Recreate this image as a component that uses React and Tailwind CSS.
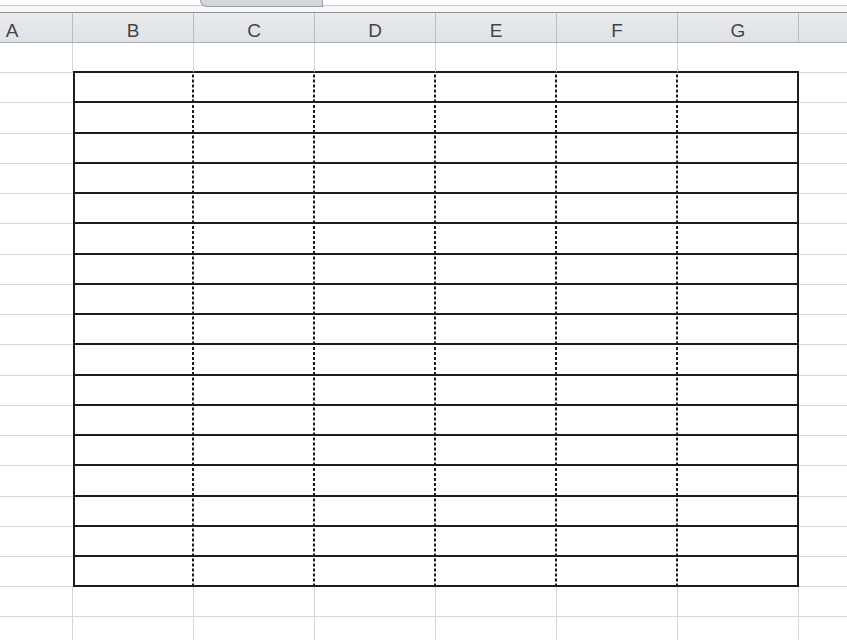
import React from "react";

const cols = ["A", "B", "C", "D", "E", "F", "G", ""];
// heights of the 17 ruled rows (Excel rounds 30.24px rows)
const tableRows = [30, 31, 30, 30, 30, 31, 30, 30, 30, 31, 30, 30, 30, 31, 30, 30, 30];

const rows = [
  { h: "h-[30px]", kind: "pre" },
  ...tableRows.map(h => ({ h: h === 31 ? "h-[31px]" : "h-[30px]", kind: "table" })),
  { h: "h-[30px]", kind: "post" },
  { h: "h-[30px]", kind: "post" },
];

const dash =
  "bg-[linear-gradient(to_bottom,#1c1c1c_3px,transparent_3px)] bg-[length:2px_5px] bg-repeat-y bg-right";

function cellClass(kind, i) {
  const base = "shrink-0 w-[121px] box-border";
  const inTable = i >= 1 && i <= 6;
  if (kind === "pre") {
    if (inTable) return `${base} border-b-2 border-b-[#1c1c1c] ${i < 6 ? "border-r border-r-[#d6d6d6]" : ""}`;
    return `${base} border-r border-b border-[#d6d6d6]`;
  }
  if (kind === "table") {
    if (i === 0 || i === 7) return `${base} border-b border-[#d6d6d6]`;
    const left = i === 1 ? "border-l-2 border-l-[#1c1c1c]" : "";
    const right = i === 6 ? "border-r-2 border-r-[#1c1c1c]" : dash;
    return `${base} border-b-2 border-b-[#1c1c1c] ${left} ${right}`;
  }
  return `${base} border-r border-b border-[#d6d6d6]`;
}

const App = () => (
  <div className="w-[847px] h-[640px] overflow-hidden bg-white" style={{ fontFamily: "'Liberation Sans', Arial, sans-serif" }}>
    {/* strip above the column header, with the sheet tab edge */}
    <div className="relative h-[13px] bg-[#f7f7f8] border-b border-[#8f949b]">
      <div className="h-[6px] border-b border-[#c4c7cc] bg-white" />
      <div className="absolute left-[200px] top-0 w-[123px] h-[7px] bg-[#d3d6da] border-b border-l border-r border-[#9a9ea4] rounded-bl-[10px]" />
    </div>

    {/* column header */}
    <div className="flex h-[30px] ml-[-48px] bg-[linear-gradient(to_bottom,#e9ebee,#dfe2e6)] border-b border-[#a9adb3]">
      {cols.map((c, i) => (
        <div key={i} className="shrink-0 w-[121px] border-r border-[#b9bdc3] flex items-center justify-center pt-[6px] text-[19px] leading-none text-[#454545]">
          {c}
        </div>
      ))}
    </div>

    {/* sheet body */}
    <div className="flex flex-col ml-[-48px]">
      {rows.map((r, ri) => (
        <div key={ri} className={`flex shrink-0 ${r.h}`}>
          {cols.map((c, i) => (
            <div key={i} className={cellClass(r.kind, i)} />
          ))}
        </div>
      ))}
    </div>
  </div>
);

export default App;
